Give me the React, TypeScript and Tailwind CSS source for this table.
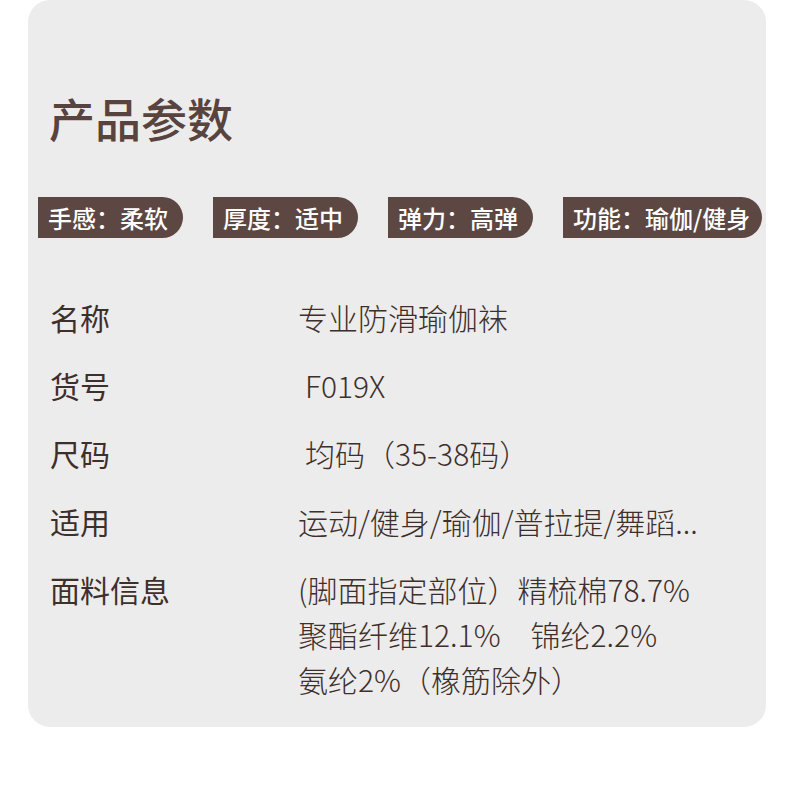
const tags = ["手感：柔软", "厚度：适中", "弹力：高弹", "功能：瑜伽/健身"];

const rows = [
  { label: "名称", value: ["专业防滑瑜伽袜"], indent: false },
  { label: "货号", value: ["F019X"], indent: true },
  { label: "尺码", value: ["均码（35-38码）"], indent: true },
  { label: "适用", value: ["运动/健身/瑜伽/普拉提/舞蹈..."], indent: false },
  {
    label: "面料信息",
    value: ["(脚面指定部位）精梳棉78.7%", "聚酯纤维12.1%\u3000锦纶2.2%", "氨纶2%（橡筋除外）"],
    indent: false,
  },
];

const App = () => {
  return (
    <div
      className="w-[790px] h-[787px] bg-white"
      style={{ fontFamily: '"Noto Sans CJK SC", "Noto Sans", sans-serif' }}
    >
      <div className="mx-[28px] w-[738px] h-[727px] bg-[#ececec] rounded-[22px] flex flex-col">
        <h1 className="ml-[21px] mt-[87px] text-[46px] leading-[60px] font-medium text-[#58433e]">
          产品参数
        </h1>

        <div className="flex gap-[30px] pl-[10px] mt-[50px]">
          {tags.map((t) => (
            <div
              key={t}
              className="h-[41px] flex items-center pl-[10px] pr-[12px] bg-[#5c4742] rounded-r-full text-white text-[24px] font-medium leading-none min-w-[145px]"
            >
              {t}
            </div>
          ))}
        </div>

        <div className="flex flex-col mt-[57px] pl-[22px] text-[#3e2f2b]">
          {rows.map((r) => (
            <div key={r.label} className="flex min-h-[68px]">
              <div className="w-[248px] text-[30px] leading-[45px]">{r.label}</div>
              <div className={"text-[30px] leading-[45px] font-light " + (r.indent ? "pl-[7px]" : "")}>
                {r.value.map((v) => (
                  <div key={v} className="whitespace-nowrap">{v}</div>
                ))}
              </div>
            </div>
          ))}
        </div>
      </div>
    </div>
  );
};

export default App;
